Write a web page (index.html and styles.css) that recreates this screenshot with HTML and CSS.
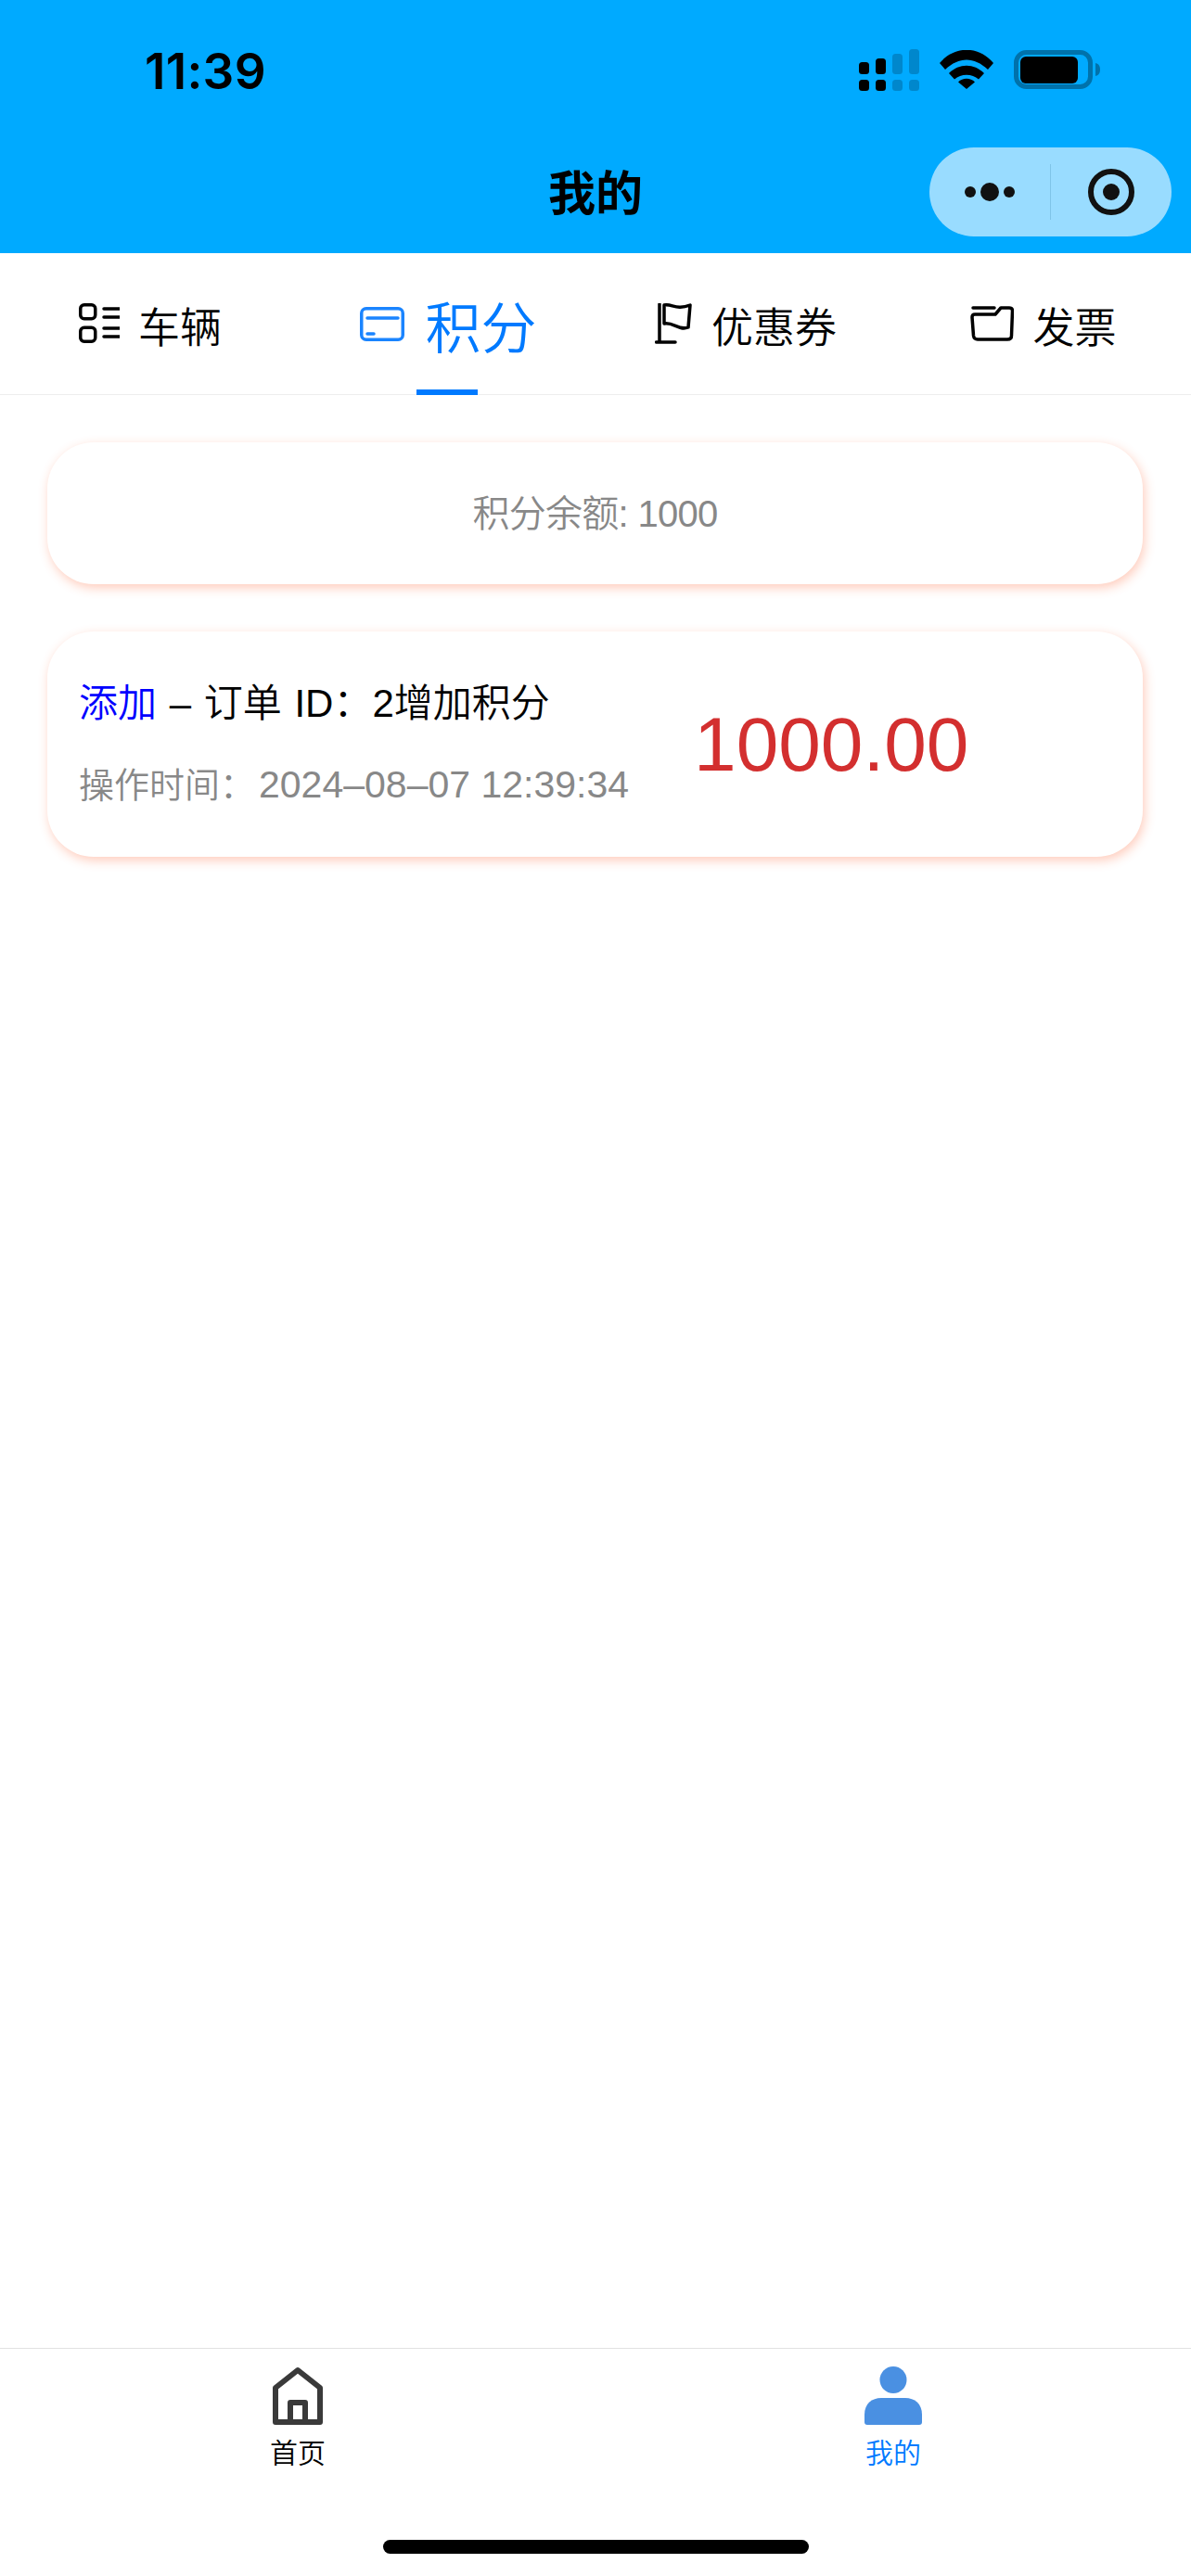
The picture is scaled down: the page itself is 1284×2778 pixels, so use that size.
FILE: index.html
```html
<!DOCTYPE html>
<html lang="zh-CN">
<head>
  <meta charset="UTF-8" />
  <meta name="viewport" content="width=device-width, initial-scale=1.0" />
  <title>我的</title>
  <link rel="stylesheet" href="styles.css">
</head>
<body>
  <header class="top">
    <div class="status">
      <span class="time">11:39</span>
      <div class="status-icons">
        <svg class="signal" width="65" height="45" viewBox="0 0 65 45">
          <rect x="0" y="14" width="11" height="13" rx="3.5" />
          <rect x="0" y="33" width="11" height="12" rx="3.5" />
          <rect x="18" y="10" width="11" height="17" rx="3.5" />
          <rect x="18" y="33" width="11" height="12" rx="3.5" />
          <rect class="faded" x="36" y="5" width="11" height="22" rx="3.5" />
          <rect class="faded" x="36" y="33" width="11" height="12" rx="3.5" />
          <rect class="faded" x="54" y="0" width="11" height="27" rx="3.5" />
          <rect class="faded" x="54" y="33" width="11" height="12" rx="3.5" />
        </svg>
        <svg width="58" height="42" viewBox="0 0 58 42">
          <path d="M0 14C16-5 42-5 58 14L52 21C37 7 21 7 6 21Z" />
          <path d="M10 25C21 14 37 14 48 25L42 31.500C35 25 23 25 16 31.500Z" />
          <path d="M20 34.500C25 29.500 33 29.500 38 34.500L29 42Z" />
        </svg>
        <svg width="93" height="42" viewBox="0 0 93 42">
          <rect class="battery-case" x="2.500" y="2.500" width="80" height="37" rx="11" />
          <rect x="7" y="7" width="62" height="29" rx="6" />
          <path class="battery-nub" d="M88 14C92 15 93 18 93 21C93 24 92 27 88 28Z" />
        </svg>
      </div>
    </div>
    <div class="nav">
      <h1 class="nav-title">我的</h1>
      <div class="capsule">
        <div class="capsule-part">
          <svg width="54" height="20" viewBox="0 0 54 20">
            <circle cx="6" cy="10" r="6" />
            <circle cx="27" cy="10" r="10" />
            <circle cx="48" cy="10" r="6" />
          </svg>
        </div>
        <div class="capsule-line"></div>
        <div class="capsule-part">
          <svg width="50" height="50" viewBox="0 0 50 50">
            <circle class="ring" cx="25" cy="25" r="22" />
            <circle cx="25" cy="25" r="9" />
          </svg>
        </div>
      </div>
    </div>
  </header>

  <nav class="tabs">
    <a class="tab">
      <svg class="tab-icon" width="44" height="43" viewBox="0 0 44 43">
        <rect x="1.750" y="1.750" width="16" height="15" rx="4" />
        <rect x="1.750" y="26.250" width="16" height="15" rx="4" />
        <path d="M27 6H44M27 15H44M27 27H44M27 36H44" />
      </svg>
      <span>车辆</span>
    </a>
    <a class="tab active">
      <svg class="tab-icon" width="48" height="37" viewBox="0 0 48 37">
        <rect x="1.750" y="1.750" width="44.500" height="33.500" rx="5" />
        <path d="M8 12H41" />
        <path d="M8 29H15" />
      </svg>
      <span>积分</span>
    </a>
    <a class="tab">
      <svg class="tab-icon" width="41" height="44" viewBox="0 0 41 44">
        <path d="M5 1V42M1.500 42H22" />
        <path d="M10 2C18 0 23 8 38 2L36 26C26 30 20 20 10 22Z" />
      </svg>
      <span>优惠券</span>
    </a>
    <a class="tab">
      <svg class="tab-icon" width="47" height="38" viewBox="0 0 47 38">
        <path d="M3 2H26" />
        <path d="M5 9H27L33 2H42C44.500 2 45.500 3.500 45.500 5L44.500 32C44.500 35 43 36 40 36H8C5 36 4 35 3.500 32L2 12C2 10 3 9 5 9Z" />
      </svg>
      <span>发票</span>
    </a>
  </nav>

  <main class="content">
    <section class="card balance">积分余额: 1000</section>
    <section class="card record">
      <div class="record-info">
        <p class="record-title"><span class="record-type">添加</span> – 订单 ID：2增加积分</p>
        <p class="record-time">操作时间：<span class="record-date">2024–08–07 12:39:34</span></p>
      </div>
      <div class="record-amount">1000.00</div>
    </section>
  </main>

  <footer class="bottom">
    <div class="tabbar">
      <a class="tabbar-item">
        <svg class="home-icon" width="54" height="63" viewBox="0 0 54 63">
          <path d="M27 4L51 23V60H3V23Z" />
          <path d="M19 60V39H35V60" />
        </svg>
        <span>首页</span>
      </a>
      <a class="tabbar-item active">
        <svg class="user-icon" width="62" height="63" viewBox="0 0 62 63">
          <circle cx="31" cy="14.500" r="14.500" />
          <path d="M0 52C0 40 8 34 18 34H44C54 34 62 40 62 52V60Q62 63 59 63H3Q0 63 0 60Z" />
        </svg>
        <span>我的</span>
      </a>
    </div>
    <div class="home-bar"></div>
  </footer>
</body>
</html>
```

FILE: styles.css
```css
* {
  box-sizing: border-box;
}
body {
  font-family: "Liberation Sans", "Noto Sans CJK SC", sans-serif;
  font-weight: 350;
  margin: 0;
  padding: 0;
  display: flex;
  flex-direction: column;
  height: 100vh;
  background: #fff;
  color: #000;
}
p, h1 {
  margin: 0;
}

/* top bar */
.top {
  background: #00aaff;
  height: 273px;
}
.status {
  display: flex;
  justify-content: space-between;
  align-items: center;
  height: 154px;
  padding: 0 98px 0 156px;
}
.time {
  font-family: Inter, sans-serif;
  font-size: 53px;
  font-weight: 600;
  letter-spacing: 0.3px;
}
.status-icons {
  display: flex;
  align-items: center;
  gap: 22px;
  margin-bottom: 4px;
}
.status-icons svg {
  display: block;
  fill: #000;
}
.status-icons .faded {
  fill: #0087cc;
}
.status-icons .battery-case {
  fill: none;
  stroke: #0072ab;
  stroke-width: 5;
}
.status-icons .battery-nub {
  fill: #0072ab;
}
.nav {
  display: grid;
  grid-template-columns: 1fr auto 1fr;
  align-items: center;
  padding: 5px 21px 0;
}
.nav-title {
  grid-column: 2;
  margin-bottom: 4px;
  font-size: 51px;
  font-weight: 700;
}
.capsule {
  grid-column: 3;
  justify-self: end;
  display: flex;
  align-items: center;
  width: 261px;
  height: 96px;
  border-radius: 48px;
  background: #99dcff;
}
.capsule-part {
  flex: 1;
  display: flex;
  justify-content: center;
  align-items: center;
}
.capsule-part svg {
  display: block;
  fill: #111;
}
.capsule-part .ring {
  fill: none;
  stroke: #111;
  stroke-width: 6;
}
.capsule-line {
  width: 1px;
  height: 60px;
  background: #7fc4e8;
}

/* tabs */
.tabs {
  display: flex;
  height: 153px;
  border-bottom: 1px solid #eee;
}
.tab {
  position: relative;
  flex: 1;
  display: flex;
  justify-content: center;
  align-items: center;
  gap: 20px;
  padding: 3px 0 0 3px;
  font-size: 45px;
}
.tab-icon {
  margin-bottom: 4px;
  fill: none;
  stroke: #000;
  stroke-width: 3.5;
  stroke-linecap: round;
  stroke-linejoin: round;
}
.tab.active {
  gap: 23px;
  padding-top: 0;
  font-size: 60px;
  color: #007aff;
}
.tab.active .tab-icon {
  margin-bottom: 0;
  stroke: #1a84ff;
}
.tab.active::after {
  content: "";
  position: absolute;
  left: 50%;
  bottom: -1px;
  width: 66px;
  height: 6px;
  margin-left: -33px;
  background: #007aff;
}

/* list */
.content {
  flex: 1;
  display: flex;
  flex-direction: column;
  gap: 51px;
  padding: 51px 52px 0 51px;
}
.card {
  border-radius: 50px;
  background: #fff;
  box-shadow: 2px 4px 12px rgba(255, 87, 34, 0.3);
}
.balance {
  display: flex;
  justify-content: center;
  align-items: center;
  height: 153px;
  padding-bottom: 6px;
  font-size: 40px;
  letter-spacing: -0.7px;
  color: #888;
}
.record {
  display: flex;
  align-items: center;
  height: 243px;
  padding: 0 33px 0 34px;
}
.record-info {
  display: flex;
  flex-direction: column;
  gap: 32px;
}
.record-title {
  padding-top: 2px;
  font-size: 42px;
  line-height: 54px;
  word-spacing: 2px;
}
.record-time {
  font-size: 38px;
  line-height: 56px;
  color: #888;
}
.record-type {
  color: #00f;
}
.record-date {
  margin-left: 4px;
  font-size: 41px;
}
.record-amount {
  margin-left: 70px;
  font-size: 82px;
  color: #d32f2f;
}

/* bottom */
.bottom {
  border-top: 1px solid #e2e2e2;
}
.tabbar {
  display: flex;
  padding-top: 19px;
}
.tabbar-item {
  flex: 1;
  display: flex;
  flex-direction: column;
  align-items: center;
  gap: 14px;
  font-size: 30px;
  line-height: 34px;
}
.tabbar-item.active {
  color: #007aff;
}
.home-icon {
  fill: none;
  stroke: #3a3a3a;
  stroke-width: 6;
  stroke-linejoin: round;
}
.user-icon {
  fill: #4a90e2;
}
.home-bar {
  width: 459px;
  height: 15px;
  margin: 76px auto 24px;
  border-radius: 8px;
  background: #000;
}
```
